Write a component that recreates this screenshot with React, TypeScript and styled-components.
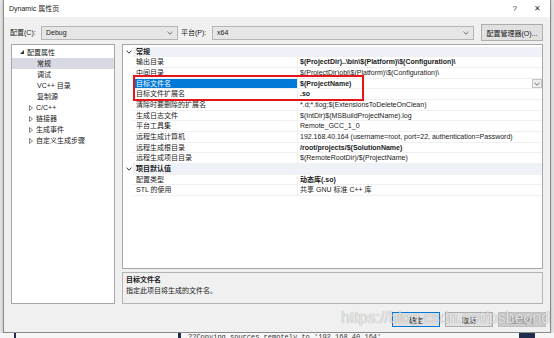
import React from "react";
import styled, { createGlobalStyle, css } from "styled-components";

const Global = createGlobalStyle`
  html, body { margin: 0; padding: 0; }
  body {
    width: 554px; height: 338px; overflow: hidden;
    background: #e9e9e9;
    font-family: "Liberation Sans", "Noto Sans CJK SC", sans-serif;
    font-size: 7px; color: #1a1a1a;
  }
  * { box-sizing: border-box; }
`;

const Page = styled.div`
  width: 554px; height: 338px;
  display: flex; flex-direction: column;
  position: relative;
`;

const Dialog = styled.div`
  margin-left: 3px;
  width: 548px; height: 333px;
  background: #f0f0f0;
  border: 1px solid #8a8a8a; border-top: none;
  box-shadow: 0 0 4px rgba(0,0,0,0.25);
  display: flex; flex-direction: column;
  position: relative;
`;

const TitleBar = styled.div`
  height: 17px; background: #fff;
  display: flex; align-items: center; justify-content: space-between;
  padding: 0 9px 0 5px;
  font-size: 7px; line-height: 17px;
`;

const TitleButtons = styled.div`
  display: flex; gap: 17px; align-items: center;
  color: #333; font-size: 8px;
`;

const Body = styled.div`
  flex: 1; display: flex; flex-direction: column;
  padding: 7px 6px 0 7px;
`;

const ConfigRow = styled.div`
  height: 17px; display: flex; align-items: center;
  margin-left: -1px;
`;

const Label = styled.span<{ $ml?: number }>`
  width: 31px; margin-left: ${p => p.$ml ?? 0}px;
  white-space: nowrap; line-height: 14px;
`;

const Combo = styled.div<{ $w: number }>`
  width: ${p => p.$w}px; height: 14px;
  background: #e6e6e6; border: 1px solid #b5b5b5;
  display: flex; align-items: center; justify-content: space-between;
  padding: 0 4px 0 4px; line-height: 12px;
`;

const ConfigButton = styled.div`
  margin-left: 7px; width: 62px; height: 17px;
  background: #e1e1e1; border: 1px solid #adadad;
  display: flex; align-items: center; justify-content: center;
  white-space: nowrap;
`;

const Main = styled.div`
  margin-top: 3px; height: 260px;
  display: flex; gap: 7px;
`;

const Tree = styled.div`
  width: 104px; height: 260px;
  background: #fff; border: 1px solid #a7a7a7;
  padding-top: 1.5px;
`;

const TreeRow = styled.div<{ $indent: number; $selected?: boolean }>`
  height: 11.1px; display: flex; align-items: center;
  padding-left: ${p => p.$indent}px;
  background: ${p => (p.$selected ? "#d9d9e3" : "transparent")};
  line-height: 11px; white-space: nowrap;
`;

const TreeToggle = styled.span`
  width: 6px; display: inline-flex; align-items: center; margin-right: 1px;
`;

const RightCol = styled.div`
  width: 421px; display: flex; flex-direction: column; gap: 3px;
`;

const Grid = styled.div`
  position: relative;
  height: 225px; background: #fff; border: 1px solid #a7a7a7;
  padding-top: 1.7px;
`;

const PropRow = styled.div<{ $cat?: boolean }>`
  height: 10.67px;
  display: grid; grid-template-columns: 10px 165px 1fr;
  line-height: 9.6px; white-space: nowrap;
  position: relative;
  ${p => p.$cat && css`
    & > div:not(:first-child) { background: #eef2f8; }
  `}
`;

const Gutter = styled.div`
  display: flex; align-items: center; justify-content: center;
  padding-left: 1px;
`;

const NameCell = styled.div<{ $selected?: boolean; $bold?: boolean }>`
  padding-left: 3px;
  border-bottom: 1px solid #f0f0f0;
  border-right: 1px solid #f0f0f0;
  background: ${p => (p.$selected ? "#0078d7" : "transparent")};
  color: ${p => (p.$selected ? "#fff" : "#1a1a1a")};
  font-weight: ${p => (p.$bold ? 700 : 400)};
  overflow: hidden;
`;

const CatCell = styled.div`
  grid-column: 2 / 4;
  padding-left: 3px; font-weight: 700;
  border-bottom: 1px solid #f0f0f0;
`;

const ValueCell = styled.div<{ $bold?: boolean }>`
  padding-left: 2px;
  border-bottom: 1px solid #f0f0f0;
  font-weight: ${p => (p.$bold ? 700 : 400)};
  overflow: hidden;
`;

const DropBtn = styled.div`
  position: absolute; right: 0px; top: 0.5px;
  width: 10px; height: 9px;
  background: #eeeeee; border: 1px solid #c4c4c4;
  display: flex; align-items: center; justify-content: center;
`;

const Annotation = styled.div`
  position: absolute; left: 10px; top: 30px;
  width: 231px; height: 26px;
  border: 2px solid #e8141c;
  pointer-events: none;
`;

const Desc = styled.div`
  height: 32px; background: #f0f0f0; border: 1px solid #b4b4b4;
  padding: 2px 3px; line-height: 10.5px;
`;

const DescTitle = styled.div` font-weight: 700; `;

const Footer = styled.div`
  margin-top: 8px; margin-right: -2px;
  display: flex; justify-content: flex-end; gap: 5px;
`;

const DlgButton = styled.div<{ $default?: boolean; $disabled?: boolean }>`
  width: 48px; height: 15px;
  display: flex; align-items: center; justify-content: center;
  background: ${p => (p.$disabled ? "#cccccc" : "#e1e1e1")};
  border: 1px solid ${p => (p.$default ? "#0078d7" : p.$disabled ? "#bfbfbf" : "#adadad")};
  color: ${p => (p.$disabled ? "#8a8a8a" : "#1a1a1a")};
`;

const Watermark = styled.div`
  position: absolute; left: 337px; top: 309px;
  font-family: "Liberation Sans", sans-serif;
  font-size: 16px; line-height: 18px;
  color: rgba(255,255,255,0.78);
  text-shadow: 0 0 1px rgba(0,0,0,0.45);
  pointer-events: none; white-space: nowrap;
`;

const BottomStrip = styled.div`
  flex: 1; background: #f6f6f6; position: relative;
  font-family: "Liberation Mono", monospace; font-size: 7px; line-height: 8px;
  overflow: hidden;
`;

const StripText = styled.span`
  position: absolute; left: 188px; top: 0px; color: #333;
`;

const StripMark = styled.span<{ $l: number; $w: number }>`
  position: absolute; left: ${p => p.$l}px; top: 0; width: ${p => p.$w}px; height: 5px;
  background: #1f2d4d;
`;

const Chevron = () => (
  <svg width="6" height="4" viewBox="0 0 6 4">
    <polyline points="0.5,0.8 3,3.2 5.5,0.8" fill="none" stroke="#606060" strokeWidth="0.9" />
  </svg>
);

const CatChevron = () => (
  <svg width="6" height="4" viewBox="0 0 6 4">
    <polyline points="0.5,0.6 3,3.2 5.5,0.6" fill="none" stroke="#333" strokeWidth="1" />
  </svg>
);

const Expanded = () => (
  <svg width="4" height="4" viewBox="0 0 4 4">
    <polygon points="4,0 4,4 0,4" fill="#333" />
  </svg>
);

const Collapsed = () => (
  <svg width="4" height="6" viewBox="0 0 4 6">
    <polygon points="0.5,0.5 3.5,3 0.5,5.5" fill="none" stroke="#666" strokeWidth="0.8" />
  </svg>
);

type Prop = { name: string; value: string; bold?: boolean; selected?: boolean } | { cat: string };

const props: Prop[] = [
  { cat: "常规" },
  { name: "输出目录", value: "$(ProjectDir)..\\bin\\$(Platform)\\$(Configuration)\\", bold: true },
  { name: "中间目录", value: "$(ProjectDir)obj\\$(Platform)\\$(Configuration)\\" },
  { name: "目标文件名", value: "$(ProjectName)", bold: true, selected: true },
  { name: "目标文件扩展名", value: ".so", bold: true },
  { name: "清除时要删除的扩展名", value: "*.d;*.tlog;$(ExtensionsToDeleteOnClean)" },
  { name: "生成日志文件", value: "$(IntDir)$(MSBuildProjectName).log" },
  { name: "平台工具集", value: "Remote_GCC_1_0" },
  { name: "远程生成计算机", value: "192.168.40.164 (username=root, port=22, authentication=Password)" },
  { name: "远程生成根目录", value: "/root/projects/$(SolutionName)", bold: true },
  { name: "远程生成项目目录", value: "$(RemoteRootDir)/$(ProjectName)" },
  { cat: "项目默认值" },
  { name: "配置类型", value: "动态库(.so)", bold: true },
  { name: "STL 的使用", value: "共享 GNU 标准 C++ 库" },
];

const tree: { label: string; indent: number; toggle?: "open" | "closed"; selected?: boolean }[] = [
  { label: "配置属性", indent: 8, toggle: "open" },
  { label: "常规", indent: 25, selected: true },
  { label: "调试", indent: 25 },
  { label: "VC++ 目录", indent: 25 },
  { label: "复制源", indent: 25 },
  { label: "C/C++", indent: 17, toggle: "closed" },
  { label: "链接器", indent: 17, toggle: "closed" },
  { label: "生成事件", indent: 17, toggle: "closed" },
  { label: "自定义生成步骤", indent: 17, toggle: "closed" },
];

export default function App() {
  return (
    <Page>
      <Global />
      <Dialog>
        <TitleBar>
          <span>Dynamic 属性页</span>
          <TitleButtons>
            <span>?</span>
            <span>✕</span>
          </TitleButtons>
        </TitleBar>
        <Body>
          <ConfigRow>
            <Label>配置(C):</Label>
            <Combo $w={137}>Debug<Chevron /></Combo>
            <Label $ml={3}>平台(P):</Label>
            <Combo $w={262}>x64<Chevron /></Combo>
            <ConfigButton>配置管理器(O)...</ConfigButton>
          </ConfigRow>
          <Main>
            <Tree>
              {tree.map((t) => (
                <TreeRow key={t.label} $indent={t.indent} $selected={t.selected}>
                  {t.toggle && (
                    <TreeToggle>{t.toggle === "open" ? <Expanded /> : <Collapsed />}</TreeToggle>
                  )}
                  {t.toggle === "closed" && <span style={{ width: 0 }} />}
                  <span>{t.label}</span>
                </TreeRow>
              ))}
            </Tree>
            <RightCol>
              <Grid>
                {props.map((p, i) =>
                  "cat" in p ? (
                    <PropRow key={i} $cat>
                      <Gutter><CatChevron /></Gutter>
                      <CatCell>{p.cat}</CatCell>
                    </PropRow>
                  ) : (
                    <PropRow key={i}>
                      <Gutter />
                      <NameCell $selected={p.selected}>{p.name}</NameCell>
                      <ValueCell $bold={p.bold}>{p.value}</ValueCell>
                      {p.selected && <DropBtn><Chevron /></DropBtn>}
                    </PropRow>
                  )
                )}
                <Annotation />
              </Grid>
              <Desc>
                <DescTitle>目标文件名</DescTitle>
                <div>指定此项目将生成的文件名。</div>
              </Desc>
            </RightCol>
          </Main>
          <Footer>
            <DlgButton $default>确定</DlgButton>
            <DlgButton>取消</DlgButton>
            <DlgButton $disabled>应用(A)</DlgButton>
          </Footer>
        </Body>
        <Watermark>https://blog.csdn.net/psbeond</Watermark>
      </Dialog>
      <BottomStrip>
        <StripMark $l={14} $w={2} />
        <StripMark $l={178} $w={3} />
        <StripText>??Copying sources remotely to '192.168.40.164'</StripText>
        <StripMark $l={519} $w={16} />
      </BottomStrip>
    </Page>
  );
}
